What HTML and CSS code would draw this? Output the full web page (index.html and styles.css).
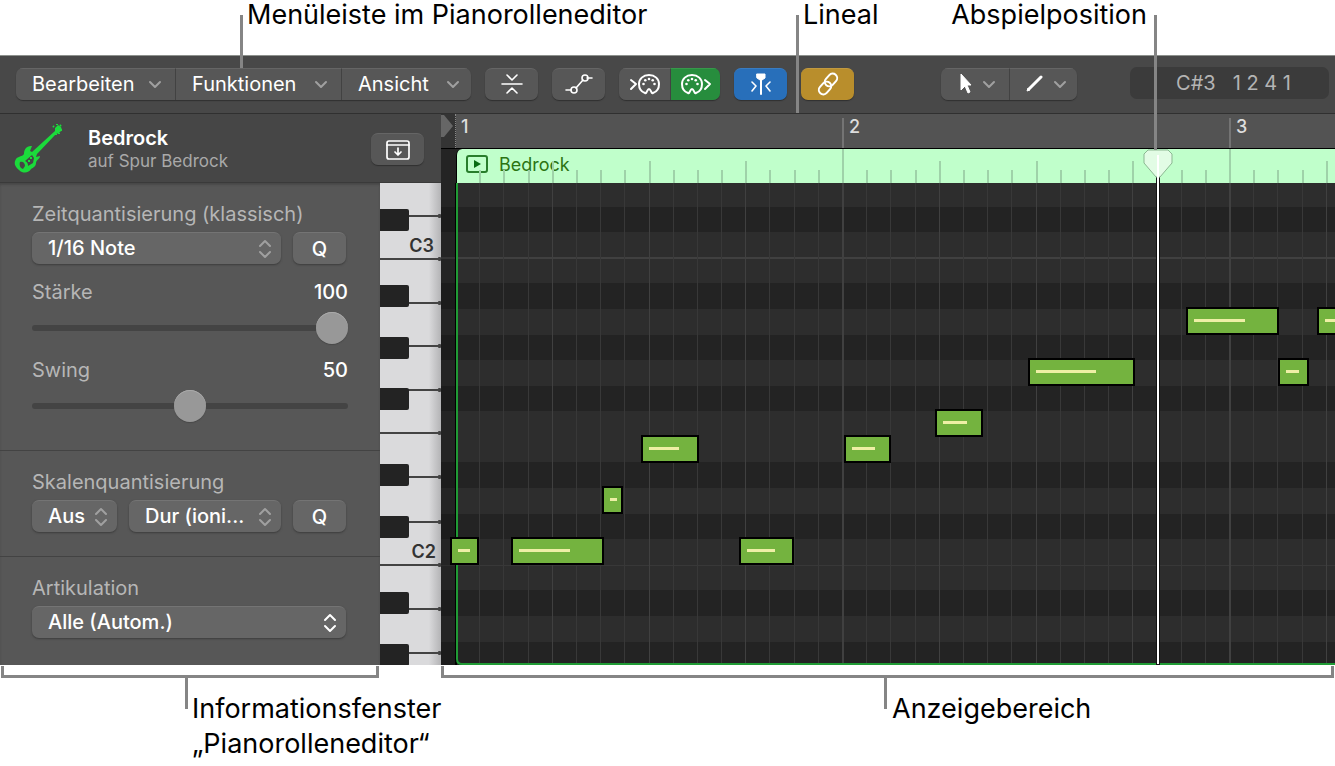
FILE: index.html
```html
<!DOCTYPE html>
<html lang="de">
<head>
  <meta charset="UTF-8" />
  <title>Pianorolleneditor</title>
  <link rel="stylesheet" href="styles.css">
</head>
<body>
  <div class="callouts">
    <p class="callout menu-callout">Menüleiste im Pianorolleneditor</p>
    <p class="callout ruler-callout">Lineal</p>
    <p class="callout playhead-callout">Abspielposition</p>
  </div>

  <main class="window">
    <div class="toolbar">
      <div class="group">
        <button class="menu menu-edit">Bearbeiten <svg class="chevron" viewBox="0 0 14 9"><path d="M2 2l5 5 5-5"/></svg></button>
        <button class="menu menu-functions">Funktionen <svg class="chevron" viewBox="0 0 14 9"><path d="M2 2l5 5 5-5"/></svg></button>
        <button class="menu menu-view">Ansicht <svg class="chevron" viewBox="0 0 14 9"><path d="M2 2l5 5 5-5"/></svg></button>
      </div>
      <button class="tool" aria-label="Einklappen">
        <svg class="icon thin" width="24" height="24" viewBox="0 0 24 24"><path d="M2 12h20M7 3l5 5 5-5M7 21l5-5 5 5"/></svg>
      </button>
      <button class="tool" aria-label="Automation">
        <svg class="icon thin" width="30" height="24" viewBox="0 0 30 24"><path d="M2 18h5M12 16l7-8M23 6h5"/><circle cx="10" cy="18" r="3"/><circle cx="21" cy="6" r="3"/></svg>
      </button>
      <div class="group">
        <button class="tool midi" aria-label="MIDI In">
          <svg class="icon" width="32" height="24" viewBox="0 0 32 24"><path d="M2 8l5 4-5 5M16 21c-3-1-6-4-6-9 0-5 4-9 10-9s10 4 10 9c0 5-3 8-6 9-2 1-2-4-4-4s-2 5-4 4z"/><g class="dots"><circle cx="14.5" cy="12" r="1.3"/><circle cx="16.3" cy="8.3" r="1.3"/><circle cx="20" cy="7" r="1.3"/><circle cx="23.7" cy="8.3" r="1.3"/><circle cx="25.5" cy="12" r="1.3"/></g></svg>
        </button>
        <button class="tool midi green" aria-label="MIDI Out">
          <svg class="icon" width="32" height="24" viewBox="0 0 32 24"><path d="M25 8l5 4-5 5M8 21c-3-1-6-4-6-9 0-5 4-9 10-9s10 4 10 9c0 5-3 8-6 9-2 1-2-4-4-4s-2 5-4 4z"/><g class="dots"><circle cx="6.5" cy="12" r="1.3"/><circle cx="8.3" cy="8.3" r="1.3"/><circle cx="12" cy="7" r="1.3"/><circle cx="15.7" cy="8.3" r="1.3"/><circle cx="17.5" cy="12" r="1.3"/></g></svg>
        </button>
      </div>
      <button class="tool blue" aria-label="Playhead folgen">
        <svg class="icon thin" width="24" height="24" viewBox="0 0 24 24"><path d="M3 10l4 4-4 5M21 10l-4 4 4 5"/><path class="stem" d="M12 8v14"/><path class="solid" d="M8 2h8v4l-3 2h-2L8 6z"/></svg>
      </button>
      <button class="tool gold" aria-label="Verknüpfen">
        <svg class="icon" width="28" height="28" viewBox="0 0 28 28"><g transform="rotate(-48 14 14)"><rect x="2" y="10" width="14" height="9" rx="4.5"/><rect x="12" y="9" width="14" height="9" rx="4.5"/></g></svg>
      </button>
      <div class="group tools">
        <button class="pick" aria-label="Zeiger">
          <svg width="14" height="24" viewBox="0 0 14 24"><path class="solid" d="M3 2v16l4-4 3 7 2-1-3-7h4z"/></svg>
          <svg class="chevron" viewBox="0 0 14 9"><path d="M2 2l5 5 5-5"/></svg>
        </button>
        <button class="pick" aria-label="Stift">
          <svg width="18" height="24" viewBox="0 0 18 24"><path class="pen" d="M4 17L16 5"/><path class="solid" d="M2 19l1-3 2 2z"/></svg>
          <svg class="chevron" viewBox="0 0 14 9"><path d="M2 2l5 5 5-5"/></svg>
        </button>
      </div>
      <div class="display"><span>C#3</span><span>1 2 4 1</span></div>
    </div>

    <div class="editor">
      <header class="track">
        <svg class="guitar" width="50" height="52" viewBox="0 0 50 52"><path d="M19 23l-2 5 2 1L42 8V5l3-3 3 2 1 3-3 3-3 1-19 20-1 3 4-1c0 3-4 4-4 7 0 3-2 4-5 6-2 4-8 5-12 1-5-4-5-8-3-11 2-3 6-2 8-5 0-4 2-8 7-8z"/><path class="hole" d="M7 39c3-1 5 1 5 4l-2 3c-3-1-4-4-3-7zM19 32l2 3-1 5-5 3c0-3-1-4-3-5z"/><path class="pegs" d="M41 4l-1-1M44 2V1M47 3l1-1M48 7h1M46 10v1M43 11v1"/><path d="M17 34h2v2h-2zM15 37h2v2h-2z"/></svg>
        <div class="names">
          <h1>Bedrock</h1>
          <p>auf Spur Bedrock</p>
        </div>
        <button class="tool catch" aria-label="Einblenden">
          <svg class="icon" width="26" height="22" viewBox="0 0 26 22"><rect x="2" y="2" width="22" height="18" rx="2"/><path d="M2 6h22M13 9v7M10 13l3 3 3-3"/></svg>
        </button>
      </header>

      <aside class="inspector">
        <section class="time">
          <label for="grid">Zeitquantisierung (klassisch)</label>
          <div class="controls">
            <div class="select wide">
              <select id="grid"><option>1/16 Note</option></select>
              <svg class="updown" viewBox="0 0 14 20"><path d="M2 7l5-5 5 5M2 13l5 5 5-5"/></svg>
            </div>
            <button class="q">Q</button>
          </div>
          <div class="value"><label for="strength">Stärke</label><output>100</output></div>
          <input id="strength" type="range" min="0" max="100" value="100" />
          <div class="value swing"><label for="swing">Swing</label><output>50</output></div>
          <input id="swing" type="range" min="0" max="100" value="50" />
        </section>
        <section>
          <label for="scale">Skalenquantisierung</label>
          <div class="controls">
            <div class="select root">
              <select id="root" aria-label="Grundton"><option>Aus</option></select>
              <svg class="updown" viewBox="0 0 14 20"><path d="M2 7l5-5 5 5M2 13l5 5 5-5"/></svg>
            </div>
            <div class="select wide">
              <select id="scale"><option>Dur (ioni...</option></select>
              <svg class="updown" viewBox="0 0 14 20"><path d="M2 7l5-5 5 5M2 13l5 5 5-5"/></svg>
            </div>
            <button class="q">Q</button>
          </div>
        </section>
        <section>
          <label for="articulation">Artikulation</label>
          <div class="controls">
            <div class="select wide">
              <select id="articulation"><option>Alle (Autom.)</option></select>
              <svg class="updown active" viewBox="0 0 14 20"><path d="M2 7l5-5 5 5M2 13l5 5 5-5"/></svg>
            </div>
          </div>
        </section>
      </aside>

      <svg class="keys" id="keys"></svg>

      <div class="view">
        <div class="ruler">
          <div class="margin"><svg width="12" height="24" viewBox="0 0 12 24"><path d="M0 1h3l9 11-9 11H0z"/></svg></div>
          <div class="bar">1</div>
          <div class="bar">2</div>
          <div class="bar">3</div>
        </div>
        <div class="region">
          <svg class="ticks" id="ticks"></svg>
          <svg class="loop" width="22" height="18" viewBox="0 0 22 18"><rect x="1" y="1" width="20" height="16" rx="2"/><path d="M8 5l7 4-7 4z"/></svg>
          <span>Bedrock</span>
        </div>
        <svg class="roll" id="roll"></svg>
        <div class="playhead">
          <svg width="30" height="30" viewBox="0 0 30 30"><path d="M5 1h20l4 4v9L17 28h-4L1 14V5z"/></svg>
        </div>
      </div>
    </div>
  </main>

  <div class="brackets">
    <div class="bracket info"><p>Informationsfenster<br>„Pianorolleneditor“</p></div>
    <div class="bracket area"><p>Anzeigebereich</p></div>
  </div>

  <script src="roll.js"></script>
</body>
</html>
```
FILE: styles.css
```css
*, ::before, ::after { box-sizing: border-box; }
body { margin: 0; background: #fff; color: #000; font-family: Inter, "Liberation Sans", sans-serif; }
h1, p { margin: 0; }
button, select { font: inherit; color: #fff; border: 0; margin: 0; }
svg { display: block; flex: none; }

/* labels above the window */
.callouts { display: grid; grid-template-columns: 240px 556px 358px 1fr; height: 55px; font-size: 27px; line-height: 30px; white-space: nowrap; }
.callout { position: relative; }
.menu-callout { grid-column: 2; padding-left: 7px; }
.ruler-callout { grid-column: 3; grid-row: 1; padding-left: 7px; }
.playhead-callout { grid-column: 3; grid-row: 1; padding-right: 7px; text-align: right; }
.callout::before { content: ""; position: absolute; z-index: 3; top: 15px; left: 0; width: 3px; height: 53px; background: #858585; }
.ruler-callout::before { height: 98px; }
.playhead-callout::before { left: 100%; height: 135px; }

.window { background: #484848; border-top: 1px solid #8d918d; }

/* toolbar */
.toolbar { display: flex; align-items: center; gap: 14px; height: 58px; padding: 0 6px 2px 16px; border-bottom: 1px solid #303030; font-size: 20px; }
.group { display: flex; border-radius: 7px; overflow: hidden; box-shadow: 0 1px 1px #303030; }
.group button { border-radius: 0; box-shadow: none; }
.group button + button { border-left: 1px solid #424242; }
.menu, .tool, .pick { display: flex; align-items: center; height: 32px; padding: 0; background: #575757; border-top: 1px solid #656565; }
.menu { justify-content: space-between; padding: 0 13px 0 16px; }
.menu-edit { width: 159px; }
.menu-functions { width: 166px; }
.menu-view { width: 130px; padding-right: 11px; }
.chevron { width: 14px; height: 9px; }
.chevron path, .updown path { fill: none; stroke: #a0a0a0; stroke-width: 2; stroke-linecap: round; stroke-linejoin: round; }
.tool { justify-content: center; width: 53px; border-radius: 7px; box-shadow: 0 1px 1px #303030; }
.midi { width: 51px; }
.midi + .midi { width: 50px; }
.green { background: #278d3d; border-top-color: #37994b; }
.blue { background: #286fba; border-top-color: #397cc1; }
.gold { background: #b98e2c; border-top-color: #c1993f; }
.icon { fill: none; stroke: #fff; stroke-width: 2; stroke-linecap: round; stroke-linejoin: round; }
.icon.thin { stroke-width: 1.6; }
.icon .stem { stroke-width: 2; }
.icon .dots { fill: #fff; stroke: none; }
.solid { fill: #fff; stroke: #fff; stroke-width: 1; }
.pen { stroke: #fff; stroke-width: 3; stroke-linecap: round; }
.catch .icon { stroke-width: 1.7; }
.tools { margin-left: auto; }
.pick { justify-content: flex-end; gap: 10px; width: 68px; padding-right: 13px; }
.pick + .pick { padding-right: 10px; }
.display { display: flex; justify-content: center; gap: 17px; width: 199px; height: 32px; margin: 0 0 2px 39px; padding-left: 8px; line-height: 32px; border-radius: 7px; background: #3b3b3b; color: #b4b4b4; }

/* editor */
.editor { display: grid; grid-template-columns: 380px 61px 1fr; grid-template-rows: 69px 482px; }
.track { grid-column: 1 / 3; display: flex; align-items: center; padding: 2px 17px 0 13px; background: #464646; border-bottom: 1px solid #3a3a3a; color: #fff; }
.guitar { fill: #1bdb3b; }
.guitar .hole { fill: #464646; }
.guitar .pegs { stroke: #1bdb3b; stroke-width: 2; }
.names { flex: 1; padding-left: 25px; }
.names h1 { font-size: 20px; line-height: 24px; font-weight: 600; }
.names p { font-size: 17px; line-height: 22px; color: #a9a9a9; }

.inspector { grid-column: 1; grid-row: 2; background: #575757; color: #fff; font-size: 20px; box-shadow: inset 0 2px 2px #484848; }
.inspector section { padding: 16px 32px 24px; border-top: 1px solid #434343; }
.inspector .time { padding-bottom: 28px; border-top: 0; }
.inspector label { display: block; line-height: 30px; color: #b6b6b6; }
.controls { display: flex; gap: 12px; padding: 3px 2px 0 0; }
.select { position: relative; }
.select.wide { flex: 1; }
.root { width: 85px; }
select { appearance: none; display: block; width: 100%; height: 32px; padding: 0 0 2px 16px; }
select, .q { background: #666; border-top: 1px solid #747474; border-radius: 7px; box-shadow: 0 1px 2px #3c3c3c; font-weight: 500; }
.updown { position: absolute; top: 7px; right: 9px; width: 14px; height: 20px; pointer-events: none; }
.updown.active path { stroke: #fff; }
.q { width: 53px; height: 32px; padding: 0; }
.value { display: flex; justify-content: space-between; padding-top: 13px; line-height: 30px; font-weight: 500; }
.value label { font-weight: 400; }
.value.swing { padding-top: 11px; }
input[type=range] { appearance: none; display: block; width: 100%; height: 32px; margin: 5px 0 0; background: none; }
input[type=range]::-webkit-slider-runnable-track { height: 6px; border-radius: 3px; background: #444; }
input[type=range]::-webkit-slider-thumb { appearance: none; width: 32px; height: 32px; margin-top: -13px; border-radius: 50%; background: #989898; box-shadow: 0 1px 1px #484848, inset 0 1px 0 #aaa; }

.keys { grid-column: 2; grid-row: 2; width: 61px; height: 482px; background: linear-gradient(to right, #dadadc 80%, #b4b4b6); }
.keys .black { fill: #232323; }
.keys .gap { fill: #434343; }
.keys text { font-size: 18px; font-weight: 600; fill: #333; text-anchor: end; }

.view { grid-column: 3; grid-row: 1 / 3; position: relative; overflow: hidden; background: #242424; }
.ruler { display: flex; height: 35px; background: #535353; border-bottom: 1px solid #000; }
.ruler .margin { flex: none; width: 15px; background: #343434; border-right: 1px dotted #888; }
.ruler .margin path { fill: #666; }
.bar { flex: none; width: 387px; height: 30px; margin-top: 4px; padding-left: 5px; border-left: 2px solid #747474; line-height: 18px; font-size: 18px; font-weight: 500; color: #ddd; }
.bar:nth-child(2) { width: 386px; border-left-color: transparent; padding-left: 3px; }
.region { position: relative; display: flex; align-items: center; gap: 11px; height: 34px; margin-left: 15px; padding: 0 0 4px 9px; border-left: 1px solid #000; border-radius: 6px 0 0 0; background: #c0ffcb; color: #2c7413; font-size: 18px; }
.ticks { position: absolute; inset: 0; width: 100%; height: 34px; }
.ticks rect { fill: #9fd2a9; }
.loop rect { fill: none; stroke: #287d2c; stroke-width: 2; }
.loop path { fill: #086c13; }
.roll { width: 100%; height: 482px; }
.roll .white { fill: #2d2d2d; }
.roll .dark { fill: #232323; }
.roll .line { fill: #383838; }
.roll .beat { fill: #404040; }
.roll .shade { fill: #000; opacity: .18; }
.roll .outline { fill: none; stroke: #209b35; stroke-width: 2; }
.roll .edge { fill: #000; }
.roll .note { fill: #74b33f; stroke: #000; stroke-width: 2; }
.roll .velocity { fill: #eeefa5; }
.playhead { position: absolute; top: 40px; bottom: 0; left: 715px; width: 4px; background: #fff; border: 1px solid #111; }
.playhead svg { position: absolute; top: -6px; left: -14px; fill: #e2fce5; stroke: #8bb792; }
.playhead::after { content: ""; position: absolute; z-index: 1; top: 0; left: 0; width: 2px; height: 26px; background: #fff; }

/* labels below the window */
.brackets { display: grid; grid-template-columns: 378px 1fr; column-gap: 62px; padding: 1px 1px 0; font-size: 27px; line-height: 35px; }
.bracket { position: relative; padding: 25px 0 5px 191px; white-space: nowrap; }
.bracket::before { content: ""; position: absolute; top: 0; left: 0; width: 100%; height: 12px; border: 3px solid #858585; border-width: 0 3px 3px; }
.bracket::after { content: ""; position: absolute; top: 12px; left: 184px; width: 3px; height: 31px; background: #858585; }
.area { padding-left: 451px; }
.area::after { left: 443px; }
```
FILE: roll.js
```js
const rows = ['D3','C#3','C3','B2','A#2','A2','G#2','G2','F#2','F2','E2','D#2','D2','C#2','C2','B1','A#1','A1','G#1'];
const notes = [
  { key: 'C2', x: 10, w: 27 },
  { key: 'C2', x: 71, w: 91 },
  { key: 'D2', x: 162, w: 19 },
  { key: 'E2', x: 201, w: 56 },
  { key: 'C2', x: 299, w: 53 },
  { key: 'E2', x: 404, w: 45 },
  { key: 'F2', x: 495, w: 46 },
  { key: 'G2', x: 588, w: 105 },
  { key: 'A2', x: 746, w: 91 },
  { key: 'G2', x: 838, w: 29 },
  { key: 'A2', x: 877, w: 60 }
];
const origin = 16;
const bar = 387;
const rowTop = i => Math.round(i * 307 / 12 - 2);

function add(parent, name, attrs) {
  const el = document.createElementNS('http://www.w3.org/2000/svg', name);
  for (const a in attrs) el.setAttribute(a, attrs[a]);
  document.getElementById(parent).appendChild(el);
  return el;
}

function rect(parent, cls, x, y, width, height, rx = 0) {
  return add(parent, 'rect', { class: cls, x, y, width, height, rx });
}

// rows
rows.forEach((key, i) => {
  rect('roll', key.includes('#') ? 'dark' : 'white', 0, rowTop(i), '100%', 27);
});
rect('roll', 'beat', 0, rowTop(3) - 1, '100%', 2);
rect('roll', 'line', 0, rowTop(15), '100%', 1);

// sixteenths, in the grid and on the region
for (let n = 1; n < 80; n++) {
  const x = Math.round(n * bar / 16) - 1;
  rect('roll', n % 4 ? 'line' : 'beat', origin + x - 1, 0, n % 16 ? 1 : 2, 482);
  const h = n % 16 == 0 ? 34 : n % 4 == 0 ? 22 : 13;
  rect('ticks', '', x - 1, 34 - h, 2, h);
}
rect('roll', 'shade', 0, 0, 15, 482);
rect('roll', 'edge', 14, 0, 2, 482);
add('roll', 'path', { class: 'outline', d: 'M16 0V476Q16 481 21 481H3000' });

notes.forEach(n => {
  const y = rowTop(rows.indexOf(n.key)) - 1;
  rect('roll', 'note', n.x, y, n.w, 26);
  rect('roll', 'velocity', n.x + 7, y + 11, Math.round((n.w - 8) * 0.62), 3);
});

// keyboard
[33, 76, 120, 163, 207, 250, 294, 339, 382, 426, 470].forEach(y => {
  rect('keys', 'gap', 0, y - 1, 61, 2);
  rect('keys', 'gap', 58, y - 2, 3, 4, 1);
});
rows.forEach((key, i) => {
  if (key.includes('#')) rect('keys', 'black', -3, rowTop(i) + 2, 32, 22, 2);
});
add('keys', 'text', { x: 54, y: 69 }).textContent = 'C3';
add('keys', 'text', { x: 56, y: 375 }).textContent = 'C2';
```
